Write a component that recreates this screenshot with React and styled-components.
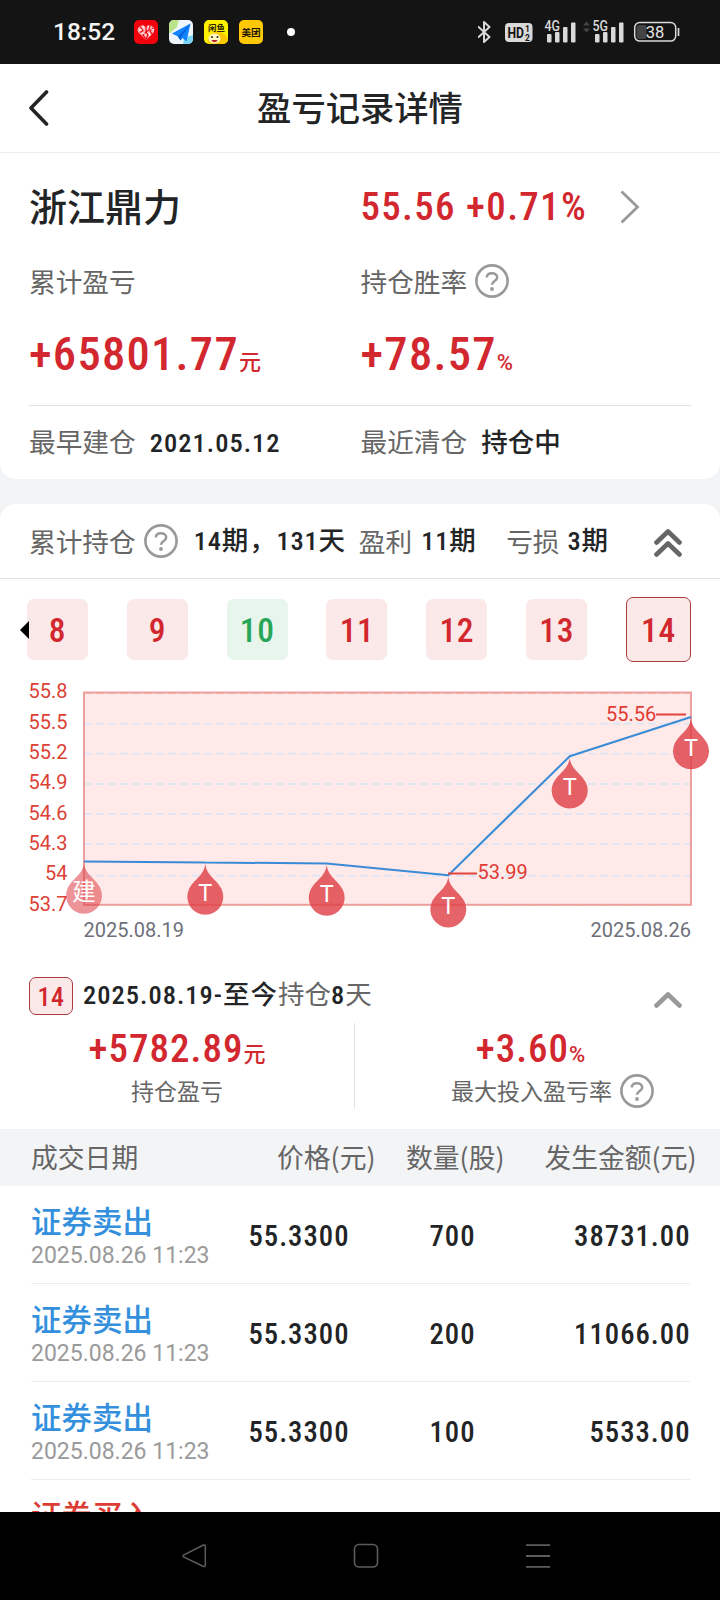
import React from 'react'
import styled, { createGlobalStyle } from 'styled-components'

const RED = '#d2272e';
const CN = "'Noto Sans CJK SC', sans-serif";
const NUM = "Roboto, 'Noto Sans CJK SC', sans-serif";

const GlobalStyle = createGlobalStyle`
  * {
    box-sizing: border-box;
  }

  body {
    margin: 0;
    background: #f3f4f6;
    font-family: ${CN};
    color: #222426;
  }
`;

// Phone screen
const Screen = styled.div`
  width: 720px;
  height: 1600px;
  display: flex;
  flex-direction: column;
  overflow: hidden;
`;

const StatusBar = styled.header`
  flex: none;
  height: 64px;
  display: flex;
  align-items: center;
  padding: 0 39px 0 53px;
  background: #141414;
`;

const Clock = styled.span`
  width: 81px;
  font: 500 24.5px/30px ${NUM};
  color: #f4f4f4;
`;

const AppIcons = styled.div`
  display: flex;
  gap: 11px;
`;

const Dot = styled.i`
  width: 8px;
  height: 8px;
  margin-left: 24px;
  border-radius: 50%;
  background: #fff;
`;

const SystemIcons = styled.div`
  margin-left: auto;
  display: flex;
`;

const TitleBar = styled.div`
  flex: none;
  height: 89px;
  display: grid;
  grid-template-columns: 80px 1fr 80px;
  align-items: center;
  background: #fff;
  border-bottom: 1px solid #eee;
`;

const BackButton = styled.button`
  height: 60px;
  padding: 0 0 0 28px;
  border: 0;
  background: none;
  text-align: left;

  svg {
    display: block;
  }
`;

const PageTitle = styled.h1`
  margin: 0;
  padding-bottom: 4px;
  font-size: 34.3px;
  font-weight: 500;
  line-height: 50px;
  text-align: center;
`;

const Content = styled.main`
  flex: 1;
  min-height: 0;
  overflow: hidden;
`;

// Summary card
const Summary = styled.section`
  height: 326px;
  padding: 0 29px;
  background: #fff;
  border-radius: 0 0 16px 16px;
`;

const Pair = styled.div`
  display: grid;
  grid-template-columns: 331.5px 1fr;
  align-items: center;
  height: ${({ $height }) => $height}px;
  padding-top: ${({ $top }) => $top || 0}px;
  padding-bottom: ${({ $bottom }) => $bottom || 0}px;
`;

const Cell = styled.div`
  display: flex;
  align-items: baseline;
  white-space: nowrap;
`;

const StockName = styled.h2`
  margin: 0;
  padding-bottom: 4px;
  font-size: 38px;
  font-weight: 500;
  line-height: 48px;
`;

const Label = styled.span`
  font-size: ${({ $size }) => $size || 26.7}px;
  line-height: 36px;
  color: #666;
  white-space: nowrap;
`;

const Num = styled.span`
  font-family: ${NUM};
  font-weight: 470;
  font-stretch: 85%;
  font-size: ${({ $size }) => $size}px;
  line-height: 1.2;
  letter-spacing: ${({ $gap }) => $gap || 0}px;
  color: ${({ $color }) => $color || 'inherit'};
  white-space: nowrap;
`;

const Unit = styled.span`
  font-family: ${NUM};
  font-weight: 500;
  font-size: 22px;
  font-stretch: 95%;
  color: ${RED};
`;

const Value = styled.span`
  font-size: 26.5px;
  font-weight: 500;
  line-height: 36px;
  margin-left: 14px;
`;

const PriceLink = styled.div`
  display: flex;
  align-items: center;

  svg {
    margin-left: auto;
    margin-right: 51px;
  }
`;

const HelpSlot = styled.span`
  display: flex;
  align-self: center;
  margin-left: ${({ $left }) => $left || 8}px;
  padding-top: ${({ $top }) => $top || 0}px;
`;

const Rule = styled.div`
  height: 1px;
  background: #e2e2e2;
`;

// Holding periods card
const Periods = styled.section`
  margin-top: 25px;
  background: #fff;
  border-radius: 16px 16px 0 0;
`;

const PeriodsHeader = styled.div`
  display: flex;
  align-items: center;
  height: 75px;
  padding: 0 38px 1px 29px;
  border-bottom: 1px solid #e2e2e2;
`;

const Stat = styled.span`
  width: ${({ $width }) => $width}px;
  font-family: ${NUM};
  font-size: 26.5px;
  font-weight: 470;
  font-stretch: 85%;
  line-height: 36px;
  letter-spacing: 0.8px;
  margin-left: ${({ $left }) => $left || 9}px;
  white-space: nowrap;
`;

const PushRight = styled.span`
  display: flex;
  margin-left: auto;
  padding-top: ${({ $top }) => $top || 0}px;
`;

const TileStrip = styled.div`
  display: flex;
  align-items: center;
  justify-content: space-between;
  height: 101px;
  padding: 0 29px 0 27px;
  position: relative;
`;

const Tile = styled.div`
  width: ${({ $active }) => ($active ? 65 : 61)}px;
  height: ${({ $active }) => ($active ? 65 : 61)}px;
  display: flex;
  align-items: center;
  justify-content: center;
  padding-top: 2px;
  border-radius: 7px;
  border: ${({ $active }) => ($active ? '1px solid #ab3a41' : '0')};
  background: ${({ $loss }) => ($loss ? '#e8f5ed' : '#fbe8e9')};
  color: ${({ $loss }) => ($loss ? '#27a657' : RED)};
  font: 480 33.5px/40px ${NUM};
  font-stretch: 85%;
  letter-spacing: 0.6px;
`;

const MoreLeft = styled.i`
  position: absolute;
  left: 20px;
  top: 42px;
  border: 9px solid transparent;
  border-left-width: 0;
  border-right-color: #000;
`;

const ChartSvg = styled.svg`
  display: block;
  font-family: ${NUM};
`;

// Selected period
const PeriodTitle = styled.div`
  display: flex;
  align-items: center;
  height: 53px;
  padding: 0 38px 1px 29px;
`;

const Badge = styled.span`
  width: 44px;
  height: 38px;
  margin-right: 10px;
  border: 1px solid #ab3a41;
  border-radius: 7px;
  background: #fbe8e9;
  color: ${RED};
  font: 480 26px/39px ${NUM};
  font-stretch: 85%;
  letter-spacing: 0.4px;
  text-align: center;
`;

const Range = styled.div`
  padding-bottom: 2px;
  font: 400 26.5px/36px ${NUM};
  color: #666;

  b {
    font-weight: 470;
    font-stretch: 85%;
    letter-spacing: 1px;
    color: #222426;
  }
`;

const Halves = styled.div`
  display: grid;
  grid-template-columns: 354px 1fr;
  height: 86px;
`;

const Half = styled.div`
  display: flex;
  flex-direction: column;
  align-items: center;
  padding-top: 3px;
  padding-right: ${({ $right }) => $right || 0}px;
  border-left: ${({ $line }) => ($line ? '1px solid #e2e2e2' : '0')};
`;

const HalfLabel = styled.div`
  display: flex;
  align-items: center;
  height: 36px;
  margin-top: -1px;
  padding-left: ${({ $left }) => $left || 0}px;
`;

// Trades table
const TableHead = styled.div`
  display: grid;
  grid-template-columns: 150px 194.5px 129px 192px;
  align-items: center;
  height: 57px;
  margin-top: 20px;
  padding: 0 0 2px 31px;
  background: #f3f4f6;
  color: #666;
  font-size: 26.8px;
  text-align: right;

  span:first-child {
    text-align: left;
  }
`;

const TradeRow = styled.div`
  display: grid;
  grid-template-columns: 190px 128.5px 126px 215px;
  align-items: center;
  height: 98px;
  margin: 0 30px 0 31px;
  padding-top: 3px;
  border-bottom: 1px solid #ececec;
  text-align: right;
`;

const Side = styled.div`
  margin-top: -1px;
  padding-bottom: 3px;
  font-size: 30.5px;
  font-weight: 500;
  line-height: 37px;
  color: ${({ $buy }) => ($buy ? '#dc3c34' : '#3490dc')};
`;

const TradeTime = styled.div`
  font: 400 23px/28px ${NUM};
  color: #9a9a9a;
`;

const TradeInfo = styled.div`
  text-align: left;
  white-space: nowrap;
`;

const NavBar = styled.footer`
  flex: none;
  height: 88px;
  background: #000;
  display: flex;
  justify-content: space-between;
  align-items: center;
  padding: 0 169px 0 181px;
`;

const tiles = [
  { n: 8 }, { n: 9 }, { n: 10, loss: true }, { n: 11 }, { n: 12 }, { n: 13 }, { n: 14, active: true },
];

const trades = [
  { side: '证券卖出', time: '2025.08.26 11:23', price: '55.3300', qty: '700', amount: '38731.00' },
  { side: '证券卖出', time: '2025.08.26 11:23', price: '55.3300', qty: '200', amount: '11066.00' },
  { side: '证券卖出', time: '2025.08.26 11:23', price: '55.3300', qty: '100', amount: '5533.00' },
  { side: '证券买入', buy: true },
];

// y positions are relative to the top of the chart (page y 680)
const axis = [
  ['55.8', 17.7], ['55.5', 49], ['55.2', 79], ['54.9', 109],
  ['54.6', 140], ['54.3', 170], ['54', 200], ['53.7', 231],
];
const gridLines = [43.7, 73.8, 104, 134, 164, 195.8];
const points = [
  [84, 181.4, '建'], [205.3, 182.5, 'T'], [326.7, 183.4, 'T'],
  [448.3, 195.2, 'T'], [569.7, 76.3, 'T'], [691, 37, 'T'],
];

const Help = () => (
  <svg width="34" height="34" viewBox="0 0 34 34" fill="none">
    <circle cx="17" cy="17" r="15.6" stroke="#999" strokeWidth="2.6" />
    <path d="M11.8 13.6C11.8 10.8 14 9.2 17 9.2s5.2 1.7 5.2 4.3c0 3.500-5.200 3.500-5.200 7.200" stroke="#999" strokeWidth="2.5" />
    <circle cx="17" cy="25" r="1.9" fill="#999" />
  </svg>
);

const Chevron = ({ color = '#999', double }) => (
  <svg width="28" height={double ? 30 : 18} viewBox={double ? '0 0 28 30' : '0 0 28 18'} fill="none"
    stroke={color} strokeWidth="4.6" strokeLinecap="round" strokeLinejoin="round">
    <path d="M2.5 14.500 14 3.500 25.500 14.500" />
    {double && <path d="M2.5 26.500 14 15.500 25.500 26.500" />}
  </svg>
);

const StatusApps = () => (
  <AppIcons>
    <svg width="24" height="24" viewBox="0 0 24 24">
      <rect width="24" height="24" rx="5" fill="#f1020c" />
      <path d="M12 20 4.500 12.500C1.500 8 7.500 2.500 12 7.200 16.500 2.500 22.500 8 19.500 12.500Z" fill="#f9b9bb" />
      <path d="M6 6.500l3 4-3 2M12 7v5l-3 3 3 4 2-4-2-3 3-2 1-4M19 8l-3 3 2 3" stroke="#f1020c" strokeWidth="1.2" fill="none" />
      <path d="M9 5.500l1 3M14 5.500l1 2M5 10h3M8 13l3 1M15 13l1 3M17 9l3 1" stroke="#fff" strokeWidth=".9" />
    </svg>
    <svg width="24" height="24" viewBox="0 0 24 24">
      <rect width="24" height="24" rx="5" fill="#eef5fd" />
      <path d="M5 0h5L8 7 0 14V5a5 5 0 0 1 5-5Z" fill="#b9e48c" />
      <path d="M14 24l1-6 9-3v4a5 5 0 0 1-5 5Z" fill="#78d6fa" />
      <path d="M21.500 3.500 3 13.500l6 3 2.500 4 2-2.500 4 3.500Z" fill="#1283ff" />
      <path d="M21.500 3.500 9 16.500l2.500 4 1-4Z" fill="#0560d8" />
    </svg>
    <svg width="24" height="24" viewBox="0 0 24 24">
      <rect width="24" height="24" rx="5" fill="#fff200" />
      <path d="M4 22c0-7 4-10 9-10s10 3 11 7v0a5 5 0 0 1-5 5H7Z" fill="#ffc800" />
      <ellipse cx="10.5" cy="18.5" rx="6" ry="5" fill="#fff6c4" />
      <text x="4" y="11" fontSize="8.5" fontWeight="700" fontFamily={CN} fill="#2c2500">闲鱼</text>
      <circle cx="8" cy="17" r="1" fill="#332200" />
      <circle cx="13.5" cy="17" r="1" fill="#332200" />
      <path d="M7.500 20h6c-1 3-5 3-6 0Z" fill="#b5271c" />
    </svg>
    <svg width="24" height="24" viewBox="0 0 24 24">
      <rect width="24" height="24" rx="5" fill="#ffc907" />
      <text x="2.5" y="16" fontSize="9.6" fontWeight="700" fontFamily={CN} fill="#1c1600">美团</text>
    </svg>
  </AppIcons>
);

const Bars = ({ x }) => (
  <g fill="#d9d9d9">
    <rect x={x} y="20" width="4.5" height="8.5" rx="1" />
    <rect x={x + 8} y="18" width="4.5" height="10.5" rx="1" />
    <rect x={x + 16} y="13" width="4.5" height="15.5" rx="1" />
    <rect x={x + 24} y="8.5" width="4.5" height="20" rx="1" />
  </g>
);

// Bluetooth, HD, both SIM signals and battery
const StatusSystem = () => (
  <SystemIcons>
    <svg width="203" height="36" viewBox="0 0 203 36" fontFamily={NUM}>
      <path d="M0 12.500 11.500 23l-5.500 5V8l5.500 5L0 23.500" fill="none" stroke="#d9d9d9" strokeWidth="2" strokeLinejoin="round" />
      <rect x="27" y="9" width="27.5" height="19" rx="4" fill="#d9d9d9" />
      <text x="29.5" y="24" fontSize="15" fontWeight="700" fill="#141414" textLength="16.5" lengthAdjust="spacingAndGlyphs">HD</text>
      <text x="47" y="17.5" fontSize="8.5" fontWeight="700" fill="#141414">1</text>
      <text x="47" y="26.5" fontSize="8.5" fontWeight="700" fill="#141414">2</text>
      <Bars x={69} />
      <text x="66.5" y="17" fontSize="14" fontWeight="500" fill="#d9d9d9" stroke="#141414" strokeWidth="2" paintOrder="stroke" textLength="15.5" lengthAdjust="spacingAndGlyphs">4G</text>
      <path d="M105 11.500 108.500 7.500l3.500 4ZM105 14.500 108.500 18.500l3.500-4Z" fill="#444" />
      <Bars x={117} />
      <text x="114.5" y="17" fontSize="14" fontWeight="500" fill="#d9d9d9" stroke="#141414" strokeWidth="2" paintOrder="stroke" textLength="15.5" lengthAdjust="spacingAndGlyphs">5G</text>
      <rect x="158.5" y="11" width="10" height="14" rx="2.5" fill="#444" />
      <rect x="156.7" y="8.6" width="41" height="18.5" rx="5" fill="none" stroke="#d9d9d9" strokeWidth="1.5" />
      <path d="M200.500 14v8" stroke="#d9d9d9" strokeWidth="1.7" />
      <text x="177" y="23.5" fontSize="16.5" fill="#e6e6e6" textAnchor="middle">38</text>
    </svg>
  </SystemIcons>
);

const Chart = () => (
  <ChartSvg width="720" height="290" viewBox="0 0 720 290" fontSize="20">
    <rect x="84" y="13" width="607" height="212" fill="#ffe9e9" />
    <g stroke="#e0e6f1" strokeWidth="2" strokeDasharray="8 4">
      {gridLines.map((y) => <path key={y} d={`M84 ${y}H691`} />)}
    </g>
    <rect x="84" y="12.5" width="607" height="212.3" fill="none" stroke="#eba09f" strokeWidth="2" />
    <path d="M84 13.500H691M84 225.500H691" stroke="#f7aea3" strokeWidth="1" strokeDasharray="8 4" />
    <g fill="#dc4136" textAnchor="end">
      {axis.map(([label, y]) => <text key={label} x="67.5" y={y}>{label}</text>)}
    </g>
    <polyline points={points.map(([x, y]) => `${x},${y}`).join(' ')} fill="none" stroke="#3a8bd6" strokeWidth="2" strokeLinejoin="bevel" />
    <path d="M448 193.500H477M656 34.500H686" stroke="#e2443c" strokeWidth="1.8" />
    <text x="477.5" y="198.7" fill="#e03c34">53.99</text>
    <text x="606" y="40.8" fill="#e03c34">55.56</text>
    {points.map(([x, y, mark]) => (
      <g key={x} transform={`translate(${x} ${y})`}>
        <path
          d="M-16.26 26.57A18 18 0 1 0 16.26 26.57C11.63 16.81 0 12.6 0 0C0 12.6-11.63 16.81-16.26 26.57Z"
          fill="#df3d44"
          fillOpacity={mark === 'T' ? 0.8 : 0.55}
        />
        <text y="38.8" fontSize="23.5" textAnchor="middle" fill="#fff">{mark}</text>
      </g>
    ))}
    <g fill="#6e7079">
      <text x="83.5" y="257">2025.08.19</text>
      <text x="691" y="257" textAnchor="end">2025.08.26</text>
    </g>
  </ChartSvg>
);

const App = () => {
  return (
    <Screen>
      <GlobalStyle />
      <StatusBar>
        <Clock>18:52</Clock>
        <StatusApps />
        <Dot />
        <StatusSystem />
      </StatusBar>

      <TitleBar>
        <BackButton aria-label="返回">
          <svg width="22" height="36" viewBox="0 0 22 36" fill="none">
            <path d="M18.500 2 3 18 18.500 34" stroke="#222426" strokeWidth="3.6" strokeLinecap="round" strokeLinejoin="round" />
          </svg>
        </BackButton>
        <PageTitle>盈亏记录详情</PageTitle>
      </TitleBar>

      <Content>
        <Summary>
          <Pair $height={108}>
            <StockName>浙江鼎力</StockName>
            <PriceLink>
              <Num $size={39} $gap={1.3} $color={RED}>55.56 +0.71%</Num>
              <svg width="20" height="34" viewBox="0 0 20 34" fill="none">
                <path d="M1.500 1.500 17.500 17 1.500 32.500" stroke="#999" strokeWidth="2.8" />
              </svg>
            </PriceLink>
          </Pair>
          <Pair $height={40} $bottom={1}>
            <Label>累计盈亏</Label>
            <Cell>
              <Label>持仓胜率</Label>
              <HelpSlot><Help /></HelpSlot>
            </Cell>
          </Pair>
          <Pair $height={104} $top={4}>
            <Cell>
              <Num $size={46.5} $gap={1.3} $color={RED}>+65801.77</Num>
              <Unit>元</Unit>
            </Cell>
            <Cell>
              <Num $size={46.5} $gap={1.3} $color={RED}>+78.57</Num>
              <Unit>%</Unit>
            </Cell>
          </Pair>
          <Rule />
          <Pair $height={73} $bottom={3}>
            <Cell>
              <Label>最早建仓</Label>
              <Value><Num $size={26.5} $gap={1}>2021.05.12</Num></Value>
            </Cell>
            <Cell>
              <Label>最近清仓</Label>
              <Value>持仓中</Value>
            </Cell>
          </Pair>
        </Summary>

        <Periods>
          <PeriodsHeader>
            <Label>累计持仓</Label>
            <HelpSlot><Help /></HelpSlot>
            <Stat $left={16} $width={165}>14期，131天</Stat>
            <Label>盈利</Label>
            <Stat $width={85}>11期</Stat>
            <Label>亏损</Label>
            <Stat $left={8} $width={45}>3期</Stat>
            <PushRight $top={4}><Chevron double color="#666" /></PushRight>
          </PeriodsHeader>

          <TileStrip>
            {tiles.map((t) => (
              <Tile key={t.n} $loss={t.loss} $active={t.active}>{t.n}</Tile>
            ))}
            <MoreLeft />
          </TileStrip>

          <Chart />

          <PeriodTitle>
            <Badge>14</Badge>
            <Range><b>2025.08.19-至今</b>持仓<b>8</b>天</Range>
            <PushRight $top={8}><Chevron /></PushRight>
          </PeriodTitle>
          <Halves>
            <Half>
              <Cell>
                <Num $size={39} $gap={1} $color={RED}>+5782.89</Num>
                <Unit>元</Unit>
              </Cell>
              <HalfLabel>
                <Label $size={23}>持仓盈亏</Label>
              </HalfLabel>
            </Half>
            <Half $line $right={14}>
              <Cell>
                <Num $size={39} $gap={1} $color={RED}>+3.60</Num>
                <Unit>%</Unit>
              </Cell>
              <HalfLabel $left={44}>
                <Label $size={23}>最大投入盈亏率</Label>
                <HelpSlot $top={3}><Help /></HelpSlot>
              </HalfLabel>
            </Half>
          </Halves>

          <TableHead>
            <span>成交日期</span>
            <span>价格(元)</span>
            <span>数量(股)</span>
            <span>发生金额(元)</span>
          </TableHead>
          {trades.map((t, i) => (
            <TradeRow key={i}>
              <TradeInfo>
                <Side $buy={t.buy}>{t.side}</Side>
                <TradeTime>{t.time || '\u00a0'}</TradeTime>
              </TradeInfo>
              <Num $size={28.7} $gap={1}>{t.price}</Num>
              <Num $size={28.7} $gap={1}>{t.qty}</Num>
              <Num $size={28.7} $gap={1}>{t.amount}</Num>
            </TradeRow>
          ))}
        </Periods>
      </Content>

      <NavBar>
        <svg width="26" height="26" viewBox="0 0 26 26" fill="none">
          <path d="M22.500 2 2.500 12Q1.500 13 2.500 14L22.500 23.500Q24.300 24 24.300 22V3.500Q24.300 1.500 22.500 2Z" stroke="#5c5c5c" strokeWidth="1.5" />
        </svg>
        <svg width="26" height="26" viewBox="0 0 26 26" fill="none">
          <rect x="1.5" y="1.5" width="23" height="22.5" rx="4.5" stroke="#5c5c5c" strokeWidth="1.6" />
        </svg>
        <svg width="26" height="26" viewBox="0 0 26 26" fill="none">
          <path d="M1 2.200H25M1 13H25M1 23.800H25" stroke="#5c5c5c" strokeWidth="1.8" />
        </svg>
      </NavBar>
    </Screen>
  );
};

export default App;
